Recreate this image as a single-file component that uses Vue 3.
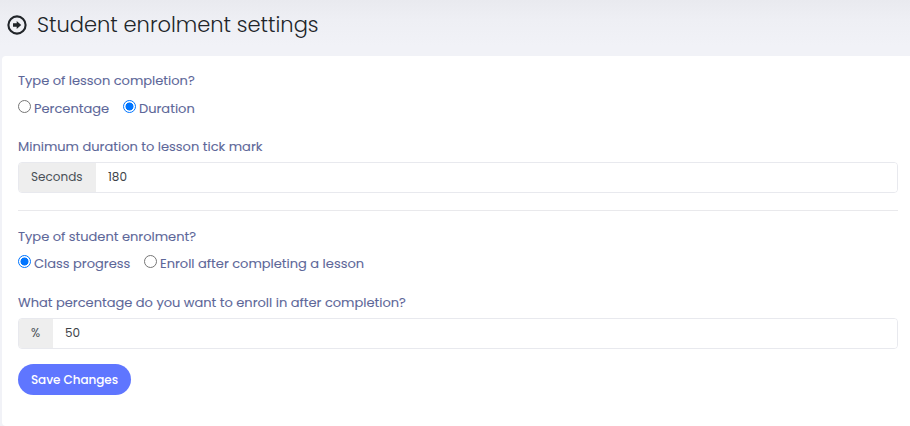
<script setup>
import { ref } from 'vue'

const completion = ref('duration')
const enrolment = ref('class')
const seconds = ref('180')
const percent = ref('50')
</script>

<template>
  <div class="page">
    <header class="heading">
      <svg class="heading-icon" viewBox="0 0 20 20" aria-hidden="true">
        <circle cx="10" cy="10" r="8.6" fill="none" stroke="currentColor" stroke-width="2.1" />
        <path d="M6 8.3h3.7V6L14.2 10l-4.5 4v-2.3H6z" fill="currentColor" />
      </svg>
      <h1>Student enrolment settings</h1>
    </header>

    <form class="card" @submit.prevent>
      <p class="label">Type of lesson completion?</p>
      <div class="radios first">
        <label class="opt-percentage">
          <input v-model="completion" type="radio" name="completion" value="percentage" />Percentage
        </label>
        <label>
          <input v-model="completion" type="radio" name="completion" value="duration" />Duration
        </label>
      </div>

      <p class="label second">Minimum duration to lesson tick mark</p>
      <div class="group">
        <span class="addon seconds">Seconds</span>
        <input v-model="seconds" class="field" type="text" />
      </div>

      <hr />

      <p class="label">Type of student enrolment?</p>
      <div class="radios">
        <label class="opt-class">
          <input v-model="enrolment" type="radio" name="enrolment" value="class" />Class progress
        </label>
        <label>
          <input v-model="enrolment" type="radio" name="enrolment" value="lesson" />Enroll after completing a lesson
        </label>
      </div>

      <p class="label third">What percentage do you want to enroll in after completion?</p>
      <div class="group">
        <span class="addon percent">%</span>
        <input v-model="percent" class="field" type="text" />
      </div>

      <button type="submit">Save Changes</button>
    </form>
  </div>
</template>

<style>
body {
  margin: 0;
  background: #f1f2f7;
}
</style>

<style scoped>
* {
  box-sizing: border-box;
}
.page {
  height: 426px;
  overflow: hidden;
  padding-left: 2px;
  background: linear-gradient(#e9eaef 0, #eeeff4 20px, #f1f2f7 46px);
  font-family: Poppins, Inter, sans-serif;
  font-size: 13px;
  color: #5d6799;
  white-space: nowrap;
}
.heading {
  display: flex;
  align-items: center;
  height: 56px;
  padding: 0 0 7px 5px;
  color: #212529;
}
.heading-icon {
  width: 20px;
  height: 20px;
  margin-right: 10px;
}
h1 {
  margin: 0;
  font-size: 21px;
  line-height: 30px;
  font-weight: 300;
}
.card {
  height: 370px;
  padding: 15px 12px 0 16px;
  background: #fff;
  border-radius: 4px 0 0 4px;
}
.label {
  margin: 0;
  line-height: 20px;
}
.label,
.radios {
  -webkit-text-stroke: 0.1px currentColor;
}
.second {
  margin-top: 18px;
}
.third {
  margin-top: 19px;
}
.radios {
  display: flex;
  margin-top: 7px;
  line-height: 20px;
}
.radios.first {
  margin-top: 8px;
}
.radios label {
  display: flex;
}
.radios input {
  appearance: none;
  width: 13px;
  height: 13px;
  margin: 1px 3px 0 0;
  border: 1px solid #767676;
  border-radius: 50%;
  background: #fff;
}
.radios input:checked {
  border-color: #0075ff;
  background: radial-gradient(circle, #0075ff 3.7px, #fff 4.3px);
}
.opt-percentage {
  width: 105px;
}
.opt-class {
  width: 126px;
}
.group {
  display: flex;
  height: 31px;
  margin-top: 5px;
  border: 1px solid #e8e9ee;
  border-radius: 4px;
  overflow: hidden;
  font-size: 12px;
}
.addon {
  display: flex;
  align-items: center;
  flex: none;
  padding: 0 0 2px 12px;
  background: #eee;
  color: #495057;
}
.seconds {
  width: 77px;
}
.percent {
  width: 34px;
}
.field {
  flex: 1;
  min-width: 0;
  padding: 0 12px 2px;
  border: 0;
  outline: 0;
  background: #fff;
  color: #3d4248;
  font: inherit;
}
hr {
  height: 1px;
  margin: 17px 0 16px;
  border: 0;
  background: #e9e9ec;
}
button {
  display: flex;
  align-items: center;
  justify-content: center;
  width: 113px;
  height: 31px;
  margin-top: 15px;
  padding: 0;
  border: 0;
  border-radius: 16px;
  background: #5f76ff;
  color: #fff;
  font: 500 12px Poppins, Inter, sans-serif;
  letter-spacing: -0.05px;
}
</style>
